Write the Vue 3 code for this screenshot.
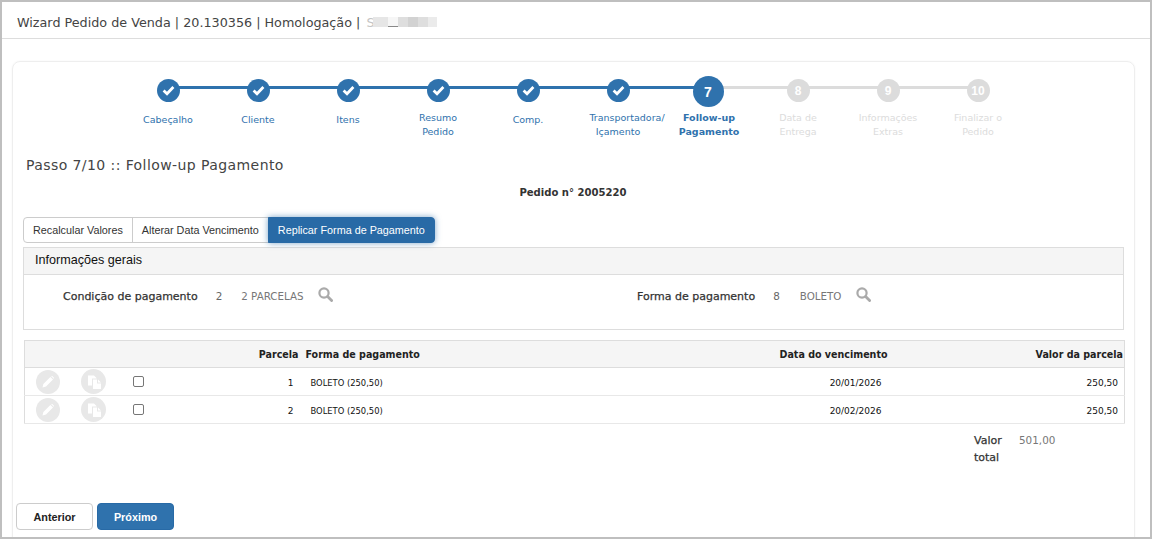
<script setup>
const steps = [
  { n: 1, lines: ['Cabeçalho'], state: 'done' },
  { n: 2, lines: ['Cliente'], state: 'done' },
  { n: 3, lines: ['Itens'], state: 'done' },
  { n: 4, lines: ['Resumo', 'Pedido'], state: 'done' },
  { n: 5, lines: ['Comp.'], state: 'done' },
  { n: 6, lines: ['Transportadora/', 'Içamento'], state: 'done' },
  { n: 7, lines: ['Follow-up', 'Pagamento'], state: 'active' },
  { n: 8, lines: ['Data de', 'Entrega'], state: 'todo' },
  { n: 9, lines: ['Informações', 'Extras'], state: 'todo' },
  { n: 10, lines: ['Finalizar o', 'Pedido'], state: 'todo' }
]
const rows = [
  { n: 1, due: '20/01/2026' },
  { n: 2, due: '20/02/2026' }
]
</script>

<template>
  <div class="page">
    <header class="topbar">
      <span>Wizard Pedido de Venda | 20.130356 | Homologação | </span>
      <span class="redact"><em>S</em><i class="r1"></i><i class="r2"></i><i class="r3"></i><i class="r4"></i><i class="r5"></i><i class="r6"></i></span>
    </header>
    <main class="card">
      <div class="stepper">
        <div v-for="s in steps" :key="s.n" class="step" :class="s.state">
          <div class="dotbox">
            <span class="dot">
              <svg v-if="s.state === 'done'" width="13" height="11" viewBox="0 0 13 11"><path d="M1.6 5.6 5 8.8 11.4 2" fill="none" stroke="#fff" stroke-width="2.8"/></svg>
              <template v-else>{{ s.n }}</template>
            </span>
          </div>
          <div class="label" :class="{ single: s.lines.length === 1 }">
            <div v-for="l in s.lines" :key="l" :class="{ nudge: l === 'Transportadora/' }">{{ l }}</div>
          </div>
        </div>
      </div>

      <h2 class="title">Passo 7/10 :: Follow-up Pagamento</h2>
      <div class="order">Pedido n° 2005220</div>

      <div class="tabs">
        <button class="tab">Recalcular Valores</button>
        <button class="tab">Alterar Data Vencimento</button>
        <button class="tab on">Replicar Forma de Pagamento</button>
      </div>

      <section class="panel">
        <div class="panel-head">Informações gerais</div>
        <div class="panel-body">
          <div class="field f1">
            <b>Condição de pagamento</b>
            <span class="code">2</span>
            <span class="val">2 PARCELAS</span>
            <svg class="lens" width="15" height="15" viewBox="0 0 15 15"><circle cx="6" cy="6" r="4.6" fill="none" stroke="#aaa" stroke-width="2.2"/><path d="M9.6 9.6 13.6 13.6" stroke="#aaa" stroke-width="2.8" stroke-linecap="round"/></svg>
          </div>
          <div class="field f2">
            <b>Forma de pagamento</b>
            <span class="code">8</span>
            <span class="val">BOLETO</span>
            <svg class="lens" width="15" height="15" viewBox="0 0 15 15"><circle cx="6" cy="6" r="4.6" fill="none" stroke="#aaa" stroke-width="2.2"/><path d="M9.6 9.6 13.6 13.6" stroke="#aaa" stroke-width="2.8" stroke-linecap="round"/></svg>
          </div>
        </div>
      </section>

      <table class="grid">
        <colgroup>
          <col style="width:46px" /><col style="width:46px" /><col style="width:44px" />
          <col style="width:139px" /><col style="width:306px" /><col style="width:283px" /><col />
        </colgroup>
        <thead>
          <tr>
            <th></th><th></th><th></th>
            <th class="r">Parcela</th>
            <th class="l">Forma de pagamento</th>
            <th class="r">Data do vencimento</th>
            <th class="r">Valor da parcela</th>
          </tr>
        </thead>
        <tbody>
          <tr v-for="r in rows" :key="r.n">
            <td class="ic">
              <span class="round"><svg width="14" height="14" viewBox="0 0 14 14"><path d="M1.5 12.5 2.4 9 9.4 2 12 4.6 5 11.6Z" fill="#fff"/><path d="M10.2 1.3 11 .8 13.2 3 12.7 3.8Z" fill="#fff"/></svg></span>
            </td>
            <td class="ic">
              <span class="round wide"><svg width="18" height="18" viewBox="0 0 18 18"><path d="M3 2.5H9L11.5 5V5.5H7V12.5H3Z" fill="#fff"/><path d="M8 6.5H12V10.5H16V16H8Z" fill="#fff"/><path d="M13 6.5 16 9.5H13Z" fill="#fff"/></svg></span>
            </td>
            <td class="ic"><span class="check"></span></td>
            <td class="r num">{{ r.n }}</td>
            <td class="l pay">BOLETO (250,50)</td>
            <td class="r num date">{{ r.due }}</td>
            <td class="r num">250,50</td>
          </tr>
        </tbody>
      </table>

      <div class="total">
        <b>Valor<br />total</b>
        <span>501,00</span>
      </div>

      <div class="actions">
        <button class="btn">Anterior</button>
        <button class="btn primary">Próximo</button>
      </div>
    </main>
  </div>
</template>

<style>
html, body { margin: 0; height: 539px; overflow: hidden; background: #fff; }
</style>

<style scoped>
.page {
  box-sizing: border-box;
  height: 539px;
  overflow: hidden;
  border: 2px solid #bfbfbf;
  background: #fff;
  font-family: "DejaVu Sans", Verdana, sans-serif;
  color: #333;
}
.topbar {
  box-sizing: border-box;
  height: 37px;
  padding: 12px 0 0 15px;
  border-bottom: 1px solid #ddd;
  font-size: 12.75px;
  line-height: 18px;
  color: #444;
  display: flex;
  white-space: pre;
}
.redact { display: flex; height: 10px; margin-top: 3px; margin-left: 2px; }
.redact em { font-style: normal; color: #c4c4c4; width: 7px; line-height: 12px; }
.redact i { display: block; height: 10px; }
.r1 { width: 15px; background: #e6e6e6; }
.r2 { width: 10px; background: #f6f6f6; border-bottom: 1px solid #888; box-sizing: border-box; }
.r3 { width: 10px; background: #dedede; }
.r4 { width: 10px; background: #d2d2d2; }
.r5 { width: 10px; background: #dedede; }
.r6 { width: 9px; background: #ebebeb; }

.card {
  box-sizing: border-box;
  margin: 22px 15px 0 10px;
  height: 520px;
  border: 1px solid #eee;
  border-radius: 8px;
  box-shadow: 0 0 2px rgba(0,0,0,.05);
  padding: 0 4px 0 3px;
}
.stepper {
  display: flex;
  justify-content: center;
  margin-top: 13px;
  height: 64px;
}
.step { width: 90px; position: relative; text-align: center; font-size: 9.5px; color: #2f72ad; }
.step::before {
  content: "";
  position: absolute;
  top: 11px;
  left: -45px;
  width: 90px;
  height: 3px;
  background: #2f72ad;
}
.step:first-child::before { display: none; }
.step.todo::before { background: #dcdcdc; }
.dotbox { height: 31px; display: flex; align-items: flex-start; justify-content: center; position: relative; z-index: 1; }
.dot {
  width: 23px;
  height: 23px;
  border-radius: 50%;
  background: #2f72ad;
  color: #fff;
  display: flex;
  align-items: center;
  justify-content: center;
  font-weight: 700;
  margin-top: 4px;
}
.active .dot { width: 31px; height: 31px; font-size: 14px; margin-top: 1px; font-family: "Liberation Sans", sans-serif; }
.todo .dot { background: #dcdcdc; font-size: 12px; font-family: "Liberation Sans", sans-serif; }
.label { line-height: 14px; margin-top: 5px; }
.label.single { margin-top: 7px; }
.nudge { margin: 0 -9px 0 9px; }
.active .label { font-weight: 700; margin-left: 1px; margin-right: -1px; }
.todo .label { color: #dcdcdc; }

.title {
  margin: 16px 0 0 10px;
  font-size: 14px;
  letter-spacing: .42px;
  line-height: 20px;
  font-weight: 400;
  color: #444;
}
.order {
  margin-top: 9px;
  text-align: center;
  font-family: "DejaVu Sans Condensed", "DejaVu Sans", sans-serif;
  font-size: 11.2px;
  line-height: 18px;
  font-weight: 700;
  color: #333;
}
.tabs { display: flex; margin: 15px 0 0 7px; height: 26px; }
.tab {
  font-family: "Liberation Sans", sans-serif;
  font-size: 10.8px;
  color: #333;
  background: #fff;
  border: 1px solid #ccc;
  padding: 0 9px;
  height: 26px;
  margin: 0 0 0 -1px;
}
.tab:first-child { border-radius: 4px 0 0 4px; margin-left: 0; }
.tab.on {
  background: #286aa6;
  border-color: #286aa6;
  color: #fff;
  border-radius: 0 4px 4px 0;
  box-shadow: 0 0 6px rgba(40,106,166,.6);
}
.panel { margin: 4px 0 0 7px; border: 1px solid #ddd; height: 83px; box-sizing: border-box; width: 1101px; }
.panel-head {
  height: 27px;
  box-sizing: border-box;
  background: #f5f5f5;
  border-bottom: 1px solid #ddd;
  font-family: "Liberation Sans", sans-serif;
  font-size: 12.6px;
  line-height: 24px;
  padding-left: 11px;
  color: #111;
}
.panel-body { display: flex; font-size: 11px; padding-top: 13px; }
.field { display: flex; align-items: flex-start; line-height: 17px; }
.field b { font-weight: 400; color: #333; -webkit-text-stroke: .25px #333; }
.f1 { width: 613px; padding-left: 39px; box-sizing: border-box; }
.code { margin-left: 18px; color: #666; font-size: 10.4px; }
.val { margin-left: 19px; color: #777; font-size: 10.3px; }
.f2 .val { margin-left: 20px; }
.lens { margin: -1px 0 0 15px; }
.f1 .lens { margin-left: 14px; }
.grid {
  margin: 10px 0 0 8px;
  width: 1101px;
  border-collapse: collapse;
  table-layout: fixed;
  border: 1px solid #ddd;
  box-sizing: border-box;
}
.grid th {
  height: 26px;
  padding: 0 1px 0 0;
  background: #f5f5f5;
  border-bottom: 1px solid #ddd;
  font-family: "DejaVu Sans Condensed", "DejaVu Sans", sans-serif;
  font-size: 10.6px;
  font-weight: 700;
  color: #222;
}
.grid td {
  height: 25px;
  padding: 2px 6px 0 0;
  border-bottom: 1px solid #e8e8e8;
  font-size: 9px;
  color: #111;
}
.r { text-align: right; }
.l { text-align: left; }
.grid th.l { padding-left: 6px; }
.grid td.pay { padding-left: 11px; font-family: "DejaVu Sans Condensed", "DejaVu Sans", sans-serif; font-size: 9.3px; }
.grid td.date { padding-right: 7px; }
.grid td.ic { padding: 0; text-align: center; }
.round {
  display: inline-flex;
  width: 24px;
  height: 24px;
  border-radius: 50%;
  background: #e8e8e8;
  align-items: center;
  justify-content: center;
  vertical-align: middle;
}
.round.wide { width: 25px; height: 25px; }
.check {
  display: inline-block;
  width: 9px;
  height: 9px;
  border: 1px solid #767676;
  border-radius: 2px;
  vertical-align: middle;
  background: #fff;
  margin-bottom: 1px;
}
.total {
  display: flex;
  margin: 8px 0 0 958px;
  font-size: 11px;
  line-height: 17px;
}
.total b { font-weight: 400; -webkit-text-stroke: .25px #333; width: 45px; }
.total span { color: #777; font-size: 10.4px; }
.actions { display: flex; gap: 4px; margin-top: 37px; }
.btn {
  width: 77px;
  height: 27px;
  box-sizing: border-box;
  border: 1px solid #ccc;
  border-radius: 4px;
  background: #fff;
  color: #222;
  font-family: "Liberation Sans", sans-serif;
  font-weight: 700;
  font-size: 10.8px;
  padding: 0;
}
.btn.primary { background: #2f72ad; border-color: #286aa6; color: #fff; }
</style>
